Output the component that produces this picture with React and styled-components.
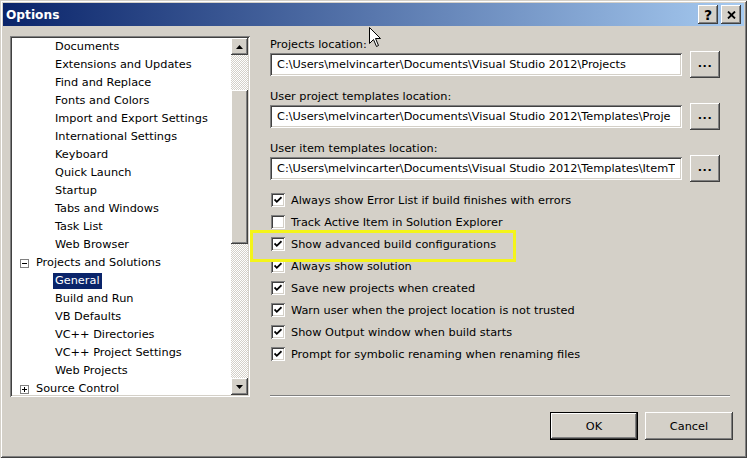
import React from 'react';
import styled, { createGlobalStyle } from 'styled-components';

const Global = createGlobalStyle`
  html, body { margin: 0; padding: 0; background: #d4d0c8; }
  body {
    font-family: "DejaVu Sans", Verdana, sans-serif;
    font-size: 11.3px;
    color: #000;
  }
`;

const raised = `box-shadow: inset -1px -1px #404040, inset 1px 1px #ffffff, inset -2px -2px #808080, inset 2px 2px #d4d0c8;`;
const sunken = `box-shadow: inset 1px 1px #808080, inset -1px -1px #ffffff, inset 2px 2px #404040, inset -2px -2px #d4d0c8;`;

const Window = styled.div`
  position: relative;
  width: 747px;
  height: 458px;
  box-sizing: border-box;
  padding: 3px;
  background: #d4d0c8;
  box-shadow: inset 1px 1px #d4d0c8, inset -1px -1px #404040, inset 2px 2px #ffffff, inset -2px -2px #808080;
  display: flex;
  flex-direction: column;
  overflow: hidden;
`;

const TitleBar = styled.div`
  height: 23px;
  flex: none;
  display: flex;
  align-items: center;
  justify-content: space-between;
  padding: 0 3px 0 3px;
  background: linear-gradient(to right, #0a246a, #a6caf0);
`;

const Title = styled.div`
  color: #fff;
  font-weight: bold;
  font-size: 12.2px;
`;

const TitleButtons = styled.div`
  display: flex;
  gap: 3px;
`;

const TitleButton = styled.div`
  width: 20px;
  height: 19px;
  box-sizing: border-box;
  background: #d4d0c8;
  ${raised}
  display: flex;
  align-items: center;
  justify-content: center;
  font-weight: bold;
  font-size: 14px;
  line-height: 1;
`;

const Content = styled.div`
  display: flex;
  gap: 20px;
  padding: 10px 14px 0 7px;
`;

const Tree = styled.div`
  width: 240px;
  height: 361px;
  flex: none;
  box-sizing: border-box;
  padding: 2px;
  background: #fff;
  ${sunken}
  display: flex;
`;

const TreeList = styled.div`
  flex: 1;
  overflow: hidden;
  background: #fff;
`;

const TreeRow = styled.div`
  height: 18px;
  display: flex;
  align-items: center;
  padding-left: ${p => (p.$level === 0 ? 8 : 43)}px;
  white-space: nowrap;
`;

const Expander = styled.div`
  width: 9px;
  height: 9px;
  box-sizing: border-box;
  border: 1px solid #808080;
  background: #fff;
  position: relative;
  margin-right: 7px;
  flex: none;
  &::before {
    content: '';
    position: absolute;
    left: 1px;
    top: 3px;
    width: 5px;
    height: 1px;
    background: #000;
  }
  &::after {
    content: '';
    display: ${p => (p.$open ? 'none' : 'block')};
    position: absolute;
    left: 3px;
    top: 1px;
    width: 1px;
    height: 5px;
    background: #000;
  }
`;

const ItemText = styled.span`
  padding: 1px 2px;
  margin-left: -2px;
  background: ${p => (p.$selected ? '#0a246a' : 'transparent')};
  color: ${p => (p.$selected ? '#fff' : '#000')};
  line-height: 14px;
`;

const ScrollBar = styled.div`
  width: 17px;
  flex: none;
  display: flex;
  flex-direction: column;
`;

const ScrollButton = styled.div`
  width: 17px;
  height: 17px;
  box-sizing: border-box;
  background: #d4d0c8;
  ${raised}
  display: flex;
  align-items: center;
  justify-content: center;
  flex: none;
`;

const Track = styled.div`
  flex: 1;
  background-color: #fff;
  background-image: repeating-conic-gradient(#d4d0c8 0 25%, #ffffff 0 50%);
  background-size: 2px 2px;
`;

const Thumb = styled.div`
  margin-top: 35px;
  height: 154px;
  background: #d4d0c8;
  ${raised}
`;

const Right = styled.div`
  position: relative;
  width: 460px;
  height: 361px;
  display: flex;
  flex-direction: column;
`;

const Group = styled.div`
  width: 450px;
  margin-bottom: 10px;
`;

const Label = styled.div`
  margin-top: 2px;
  line-height: 13px;
  height: 13px;
  white-space: nowrap;
`;

const FieldRow = styled.div`
  display: flex;
  align-items: center;
  gap: 8px;
  height: 27px;
`;

const TextBox = styled.div`
  width: 412px;
  height: 23px;
  flex: none;
  box-sizing: border-box;
  background: #fff;
  ${sunken}
  padding: 0 3px 0 7px;
  display: flex;
  align-items: center;
  overflow: hidden;
`;

const TextValue = styled.span`
  display: block;
  min-width: 0;
  white-space: nowrap;
  overflow: hidden;
`;

const BrowseButton = styled.div`
  width: 30px;
  height: 27px;
  flex: none;
  box-sizing: border-box;
  background: #d4d0c8;
  ${raised}
  display: flex;
  align-items: center;
  justify-content: center;
  font-weight: bold;
  letter-spacing: 0.5px;
  padding-bottom: 2px;
`;

const Checks = styled.div`
  margin-top: -3px;
  padding-left: 1px;
`;

const CheckRow = styled.div`
  height: 22px;
  display: flex;
  align-items: center;
  gap: 6px;
  white-space: nowrap;
`;

const Box = styled.div`
  width: 14px;
  height: 14px;
  box-sizing: border-box;
  background: #fff;
  ${sunken}
  display: flex;
  align-items: center;
  justify-content: center;
  flex: none;
`;

const Highlight = styled.div`
  position: absolute;
  left: -20px;
  top: 194px;
  width: 266px;
  height: 32px;
  box-sizing: border-box;
  border: 3px solid #f4f41a;
  pointer-events: none;
`;

const Separator = styled.div`
  margin-top: auto;
  height: 2px;
  box-sizing: border-box;
  border-top: 1px solid #808080;
  border-bottom: 1px solid #ffffff;
`;

const Footer = styled.div`
  display: flex;
  justify-content: flex-end;
  gap: 7px;
  padding: 15px 11px 0 0;
`;

const DialogButton = styled.div`
  width: 88px;
  height: 28px;
  box-sizing: border-box;
  background: #d4d0c8;
  display: flex;
  align-items: center;
  justify-content: center;
  ${p =>
    p.$default
      ? 'box-shadow: inset 0 0 0 1px #000000, inset -2px -2px #404040, inset 2px 2px #ffffff, inset -3px -3px #808080;'
      : raised}
`;

const Cursor = styled.svg`
  position: absolute;
  left: 369px;
  top: 27px;
`;

const treeItems = [
  { t: 'Documents', l: 1 },
  { t: 'Extensions and Updates', l: 1 },
  { t: 'Find and Replace', l: 1 },
  { t: 'Fonts and Colors', l: 1 },
  { t: 'Import and Export Settings', l: 1 },
  { t: 'International Settings', l: 1 },
  { t: 'Keyboard', l: 1 },
  { t: 'Quick Launch', l: 1 },
  { t: 'Startup', l: 1 },
  { t: 'Tabs and Windows', l: 1 },
  { t: 'Task List', l: 1 },
  { t: 'Web Browser', l: 1 },
  { t: 'Projects and Solutions', l: 0, open: true },
  { t: 'General', l: 1, sel: true },
  { t: 'Build and Run', l: 1 },
  { t: 'VB Defaults', l: 1 },
  { t: 'VC++ Directories', l: 1 },
  { t: 'VC++ Project Settings', l: 1 },
  { t: 'Web Projects', l: 1 },
  { t: 'Source Control', l: 0, open: false },
];

const fields = [
  { label: 'Projects location:', value: 'C:\\Users\\melvincarter\\Documents\\Visual Studio 2012\\Projects' },
  { label: 'User project templates location:', value: 'C:\\Users\\melvincarter\\Documents\\Visual Studio 2012\\Templates\\Proje' },
  { label: 'User item templates location:', value: 'C:\\Users\\melvincarter\\Documents\\Visual Studio 2012\\Templates\\ItemT' },
];

const checks = [
  { t: 'Always show Error List if build finishes with errors', c: true },
  { t: 'Track Active Item in Solution Explorer', c: false },
  { t: 'Show advanced build configurations', c: true },
  { t: 'Always show solution', c: true },
  { t: 'Save new projects when created', c: true },
  { t: 'Warn user when the project location is not trusted', c: true },
  { t: 'Show Output window when build starts', c: true },
  { t: 'Prompt for symbolic renaming when renaming files', c: true },
];

const Check = () => (
  <svg width="8" height="8" viewBox="0 0 8 8">
    <path d="M0.5 3.5 L2.8 5.8 L7.5 1.2" fill="none" stroke="#000" strokeWidth="1.8" />
  </svg>
);

const Arrow = ({ down }) => (
  <svg width="7" height="4" viewBox="0 0 7 4">
    <path d={down ? 'M0 0 H7 L3.5 4 Z' : 'M3.5 0 L7 4 H0 Z'} fill="#000" />
  </svg>
);

export default function App() {
  return (
    <>
      <Global />
      <Window>
        <TitleBar>
          <Title>Options</Title>
          <TitleButtons>
            <TitleButton>?</TitleButton>
            <TitleButton>
              <svg width="9" height="8" viewBox="0 0 9 8">
                <path d="M1 0.5 L8 7.5 M8 0.5 L1 7.5" stroke="#000" strokeWidth="1.8" />
              </svg>
            </TitleButton>
          </TitleButtons>
        </TitleBar>
        <Content>
          <Tree>
            <TreeList>
              {treeItems.map(it => (
                <TreeRow key={it.t} $level={it.l}>
                  {it.l === 0 && <Expander $open={it.open} />}
                  <ItemText $selected={it.sel}>{it.t}</ItemText>
                </TreeRow>
              ))}
            </TreeList>
            <ScrollBar>
              <ScrollButton><Arrow /></ScrollButton>
              <Track><Thumb /></Track>
              <ScrollButton><Arrow down /></ScrollButton>
            </ScrollBar>
          </Tree>
          <Right>
            {fields.map(f => (
              <Group key={f.label}>
                <Label>{f.label}</Label>
                <FieldRow>
                  <TextBox><TextValue>{f.value}</TextValue></TextBox>
                  <BrowseButton>...</BrowseButton>
                </FieldRow>
              </Group>
            ))}
            <Checks>
              {checks.map(c => (
                <CheckRow key={c.t}>
                  <Box>{c.c && <Check />}</Box>
                  <span>{c.t}</span>
                </CheckRow>
              ))}
            </Checks>
            <Separator />
            <Highlight />
          </Right>
        </Content>
        <Footer>
          <DialogButton $default>OK</DialogButton>
          <DialogButton>Cancel</DialogButton>
        </Footer>
        <Cursor width="13" height="21" viewBox="0 0 13 21">
          <path d="M0.5 0.5 V16.5 L4.5 12.5 L7.5 19.5 L9.5 18.5 L6.5 11.5 H11.5 Z" fill="#fff" stroke="#000" strokeWidth="1" />
        </Cursor>
      </Window>
    </>
  );
}
